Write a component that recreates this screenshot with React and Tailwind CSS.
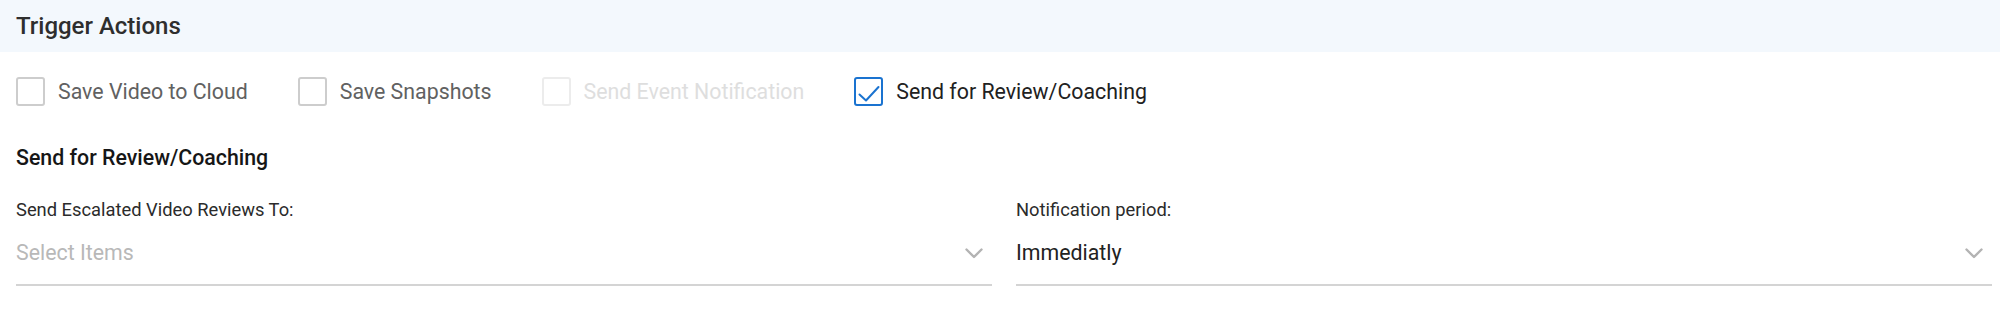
import React, { useState } from 'react';

const actions = [
  { id: 'cloud', label: 'Save Video to Cloud', checked: false },
  { id: 'snapshots', label: 'Save Snapshots', checked: false },
  { id: 'notify', label: 'Send Event Notification', checked: false, disabled: true },
  { id: 'review', label: 'Send for Review/Coaching', checked: true },
];

const Chevron = () => (
  <svg width="18" height="11" viewBox="0 0 18 11" fill="none" className="shrink-0">
    <path d="M1.5 1.5 L9 9 L16.5 1.5" stroke="#b3b3b3" strokeWidth="2.4" strokeLinecap="round" strokeLinejoin="round" />
  </svg>
);

const Checkbox = ({ item, onToggle }) => {
  const { label, checked, disabled } = item;

  return (
    <label className={`flex items-center mr-[50px] ${disabled ? 'cursor-not-allowed' : 'cursor-pointer'}`}>
      <span
        onClick={() => !disabled && onToggle(item.id)}
        className={`w-[29px] h-[29px] rounded-[3px] border-2 flex items-center justify-center ${
          checked ? 'border-[#1a73d0]' : disabled ? 'border-[#ececec]' : 'border-[#cdcdcd]'
        }`}
      >
        {checked && (
          <svg width="25" height="25" viewBox="0 0 25 25" fill="none">
            <path d="M3.5 15.5 L10 21.5 L22.5 8" stroke="#1a73d0" strokeWidth="2" strokeLinecap="round" strokeLinejoin="round" />
          </svg>
        )}
      </span>
      <span
        className={`ml-[13px] text-[21.33px] leading-7 ${
          checked ? 'text-[#212121]' : disabled ? 'text-[#dedede]' : 'text-[#616161]'
        }`}
      >
        {label}
      </span>
    </label>
  );
};

const SelectField = ({ label, value, placeholder }) => (
  <div className="flex flex-col">
    <div className="text-[18.33px] leading-6 text-[#2b2b2b]">{label}</div>
    <div className="mt-[17px] flex items-center justify-between pb-[17px] pr-[9px] border-b-2 border-[#d4d4d4]">
      <span className={`text-[21.33px] leading-7 ${value ? 'text-[#222222]' : 'text-[#b8b8b8]'}`}>
        {value || placeholder}
      </span>
      <Chevron />
    </div>
  </div>
);

export default function App() {
  const [items, setItems] = useState(actions);

  const toggle = (id) => {
    setItems(prev => prev.map(i => (i.id === id ? { ...i, checked: !i.checked } : i)));
  };

  return (
    <div className="w-[2000px] h-[310px] bg-white font-['Roboto',sans-serif]">
      {/* Section header */}
      <div className="h-[52px] bg-[#f3f8fd] flex items-center px-4">
        <h2 className="text-[24px] font-medium text-[#2e2e2e]">Trigger Actions</h2>
      </div>

      {/* Trigger checkboxes */}
      <div className="flex items-center pl-4 mt-[25px]">
        {items.map(item => (
          <Checkbox key={item.id} item={item} onToggle={toggle} />
        ))}
      </div>

      {/* Review / coaching settings */}
      <div className="pl-4 pr-2 mt-[40px]">
        <h3 className="text-[21.33px] leading-6 font-medium text-[#161616]">Send for Review/Coaching</h3>
        <div className="grid grid-cols-2 gap-6 mt-[28px]">
          <SelectField label="Send Escalated Video Reviews To:" placeholder="Select Items" />
          <SelectField label="Notification period:" value="Immediatly" />
        </div>
      </div>
    </div>
  );
}
